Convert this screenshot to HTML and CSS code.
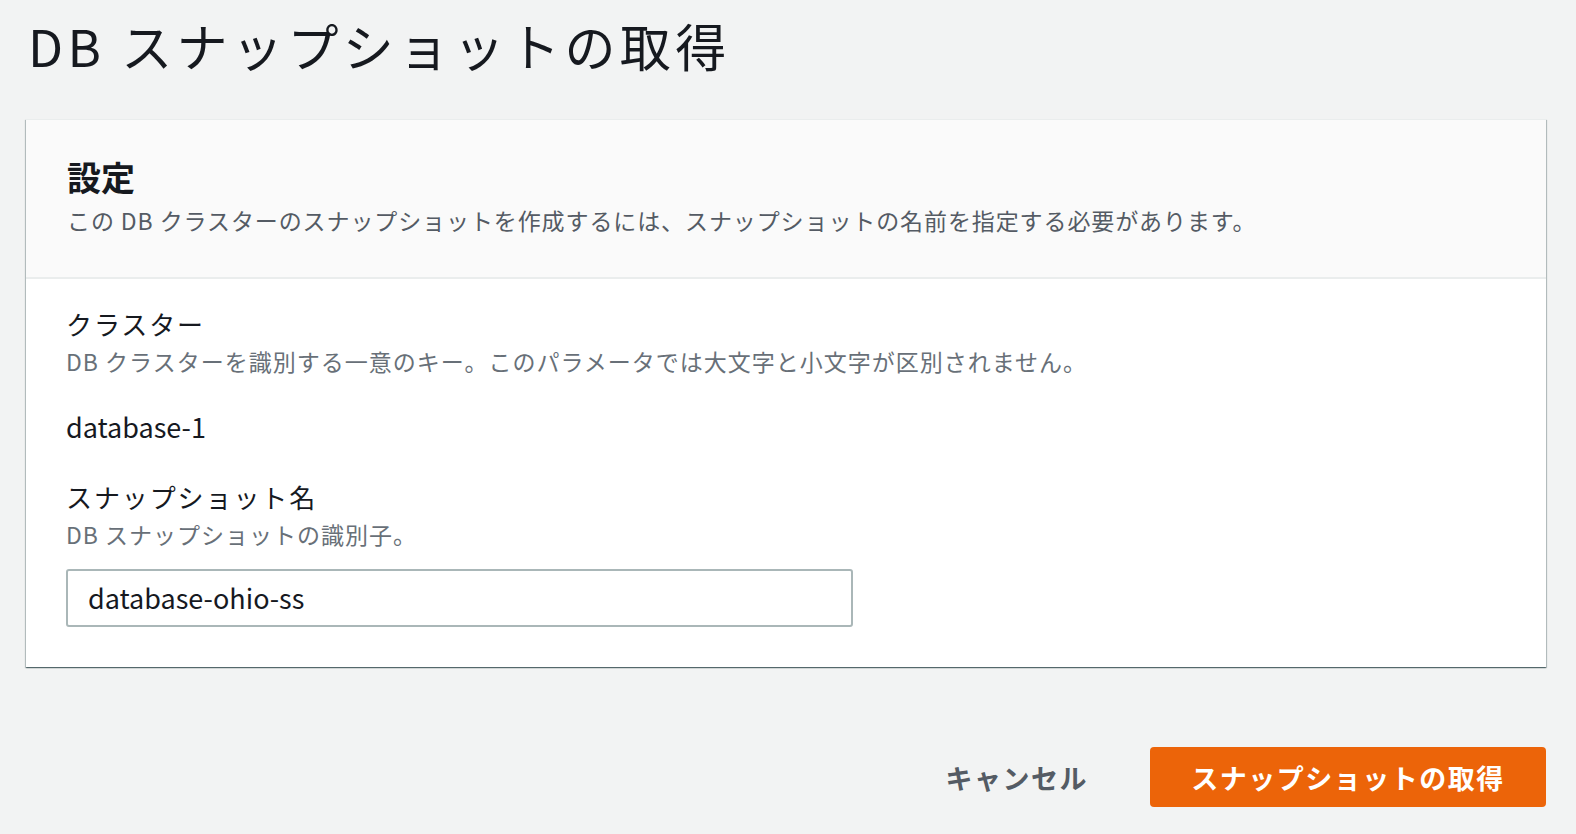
FILE: index.html
```html
<!DOCTYPE html>
<html lang="ja">
<head>
<meta charset="utf-8">
<link rel="stylesheet" href="styles.css">
</head>
<body>
<main class="page">
  <h1 class="title">DB スナップショットの取得</h1>
  <section class="card">
    <header class="card-header">
      <h2 class="card-title">設定</h2>
      <p class="card-desc">この DB クラスターのスナップショットを作成するには、スナップショットの名前を指定する必要があります。</p>
    </header>
    <div class="card-body">
      <div class="field">
        <div class="label">クラスター</div>
        <div class="hint">DB クラスターを識別する一意のキー。このパラメータでは大文字と小文字が区別されません。</div>
        <div class="value">database-1</div>
      </div>
      <div class="field">
        <div class="label">スナップショット名</div>
        <div class="hint">DB スナップショットの識別子。</div>
        <div class="input">database-ohio-ss</div>
      </div>
    </div>
  </section>
  <div class="actions">
    <button class="btn-link">キャンセル</button>
    <button class="btn-primary">スナップショットの取得</button>
  </div>
</main>
</body>
</html>
```

FILE: styles.css
```css
html, body {
  margin: 0;
  padding: 0;
  background: #f2f3f3;
}
body {
  font-family: "Noto Sans CJK JP", "Noto Sans", sans-serif;
  color: #16191f;
}
.page {
  padding: 0 30px 0 26px;
}
.title {
  margin: 0;
  padding: 12px 0 0 2px;
  height: 119px;
  box-sizing: border-box;
  font-size: 51px;
  font-weight: 400;
  line-height: 66px;
  letter-spacing: 4.4px;
}
.card {
  background: #fff;
  box-shadow: 0 1px 1px 0 rgba(0,28,36,0.45), 1px 1px 1px 0 rgba(0,28,36,0.2), -1px 1px 1px 0 rgba(0,28,36,0.2);
  border-top: 1px solid #eaeded;
}
.card-header {
  background: #fafafa;
  border-bottom: 2px solid #eaeded;
  padding: 34px 41px 40px;
}
.card-title {
  margin: 0;
  font-size: 34px;
  font-weight: 700;
  line-height: 46px;
}
.card-desc {
  margin: 3px 0 0;
  font-size: 23px;
  line-height: 34px;
  color: #545b64;
  letter-spacing: 0.9px;
}
.card-body {
  padding: 26px 40px 40px;
}
.field + .field {
  margin-top: 32px;
}
.label {
  font-size: 26px;
  line-height: 38px;
  letter-spacing: 1.9px;
}
.hint {
  margin-top: 1px;
  font-size: 23px;
  line-height: 34px;
  color: #687078;
  letter-spacing: 1px;
}
.value {
  margin-top: 30px;
  font-size: 27px;
  line-height: 38px;
}
.input {
  margin-top: 18px;
  width: 787px;
  height: 58px;
  box-sizing: border-box;
  border: 2px solid #aab7b8;
  border-radius: 3px;
  background: #fff;
  padding: 0 20px;
  font-size: 27px;
  line-height: 54px;
}
.actions {
  display: flex;
  justify-content: flex-end;
  align-items: center;
  gap: 62px;
  margin-top: 80px;
}
.btn-link {
  background: none;
  border: none;
  font-family: inherit;
  font-size: 27px;
  font-weight: 700;
  color: #545b64;
  letter-spacing: 1.5px;
  padding: 0;
}
.btn-primary {
  background: #ec6409;
  border: none;
  border-radius: 4px;
  color: #fff;
  font-family: inherit;
  font-size: 27px;
  font-weight: 700;
  letter-spacing: 1.5px;
  width: 396px;
  height: 60px;
  padding: 0;
}
```
